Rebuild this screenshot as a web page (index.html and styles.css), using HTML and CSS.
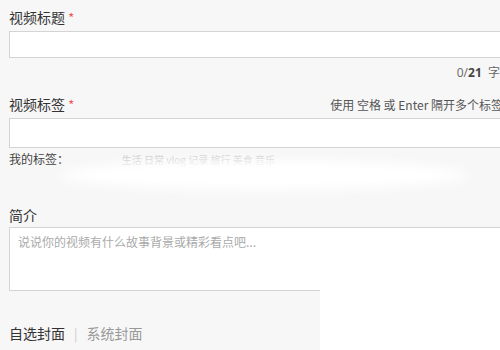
FILE: index.html
```html
<!DOCTYPE html>
<html lang="zh-CN">
<head>
    <meta charset="UTF-8">
    <meta name="viewport" content="width=device-width, initial-scale=1.0">
    <title>视频信息</title>
    <link rel="stylesheet" href="styles.css">
</head>
<body>
    <div class="form">
        <div class="field">
            <label class="label">视频标题 <span class="req">*</span></label>
            <input type="text" class="text-input">
            <div class="counter">0/<b>21</b> &nbsp;字</div>
        </div>

        <div class="field">
            <div class="label-row">
                <label class="label">视频标签 <span class="req">*</span></label>
                <span class="hint">使用 空格 或 Enter 隔开多个标签</span>
            </div>
            <input type="text" class="text-input tag-input">
            <div class="my-tags">
                <span class="my-tags-title">我的标签：</span>
                <span class="faded">生活 日常 vlog 记录 旅行 美食 音乐</span>
                <div class="smear"></div>
            </div>
        </div>

        <div class="field">
            <label class="label">简介</label>
            <textarea class="desc" placeholder="说说你的视频有什么故事背景或精彩看点吧..."></textarea>
        </div>

        <div class="cover-tabs">
            <span class="tab active">自选封面</span>
            <span class="sep">|</span>
            <span class="tab">系统封面</span>
        </div>
    </div>
    <div class="blank"></div>
</body>
</html>
```

FILE: styles.css
```css
body {
    margin: 0;
    background-color: #f7f7f7;
    font-family: "Noto Sans CJK SC", "DejaVu Sans", sans-serif;
    color: #333;
    overflow: hidden;
    height: 350px;
    position: relative;
}

.form {
    width: 560px;
    padding: 8px 0 0 9px;
}

.label {
    display: block;
    font-size: 14px;
    line-height: 18px;
    color: #333;
}

.req {
    color: #e55;
    font-size: 13px;
    line-height: 1;
}

.text-input {
    display: block;
    box-sizing: border-box;
    width: 100%;
    height: 27px;
    margin-top: 5px;
    border: 1px solid #d4d4d4;
    background: #fff;
    outline: none;
}

.counter {
    width: 491px;
    text-align: right;
    font-size: 12px;
    color: #666;
    margin-top: 7px;
    line-height: 16px;
    font-family: "Open Sans", "Noto Sans CJK SC", sans-serif;
}

.counter b {
    color: #444;
}

.field + .field {
    margin-top: 14px;
}

.label-row {
    display: flex;
    align-items: baseline;
}

.hint {
    margin-left: 256px;
    font-size: 12px;
    color: #555;
    white-space: nowrap;
}

.tag-input {
    height: 30px;
    margin-top: 5px;
}

.my-tags {
    position: relative;
    font-size: 12px;
    line-height: 18px;
    margin-top: 2px;
    height: 42px;
}

.my-tags-title {
    color: #444;
}

.faded {
    margin-left: 50px;
    color: #ccc;
    font-size: 10px;
}

.smear {
    position: absolute;
    left: 50px;
    top: 10px;
    width: 410px;
    height: 30px;
    background: #fff;
    border-radius: 50%;
    filter: blur(6px);
}

.desc {
    display: block;
    box-sizing: border-box;
    width: 100%;
    height: 64px;
    margin-top: 3px;
    padding: 5px 8px;
    border: 1px solid #d4d4d4;
    background: #fff;
    resize: none;
    font-family: "Noto Sans CJK SC", sans-serif;
    font-size: 12px;
    outline: none;
}

.desc::placeholder {
    color: #aaa;
}

.cover-tabs {
    margin-top: 32px;
    font-size: 14px;
    display: flex;
    align-items: center;
    gap: 9px;
}

.tab {
    color: #999;
}

.tab.active {
    color: #333;
}

.sep {
    color: #ccc;
    font-size: 13px;
}

.blank {
    position: absolute;
    left: 320px;
    top: 289px;
    right: 0;
    bottom: 0;
    background: #fff;
}
```
